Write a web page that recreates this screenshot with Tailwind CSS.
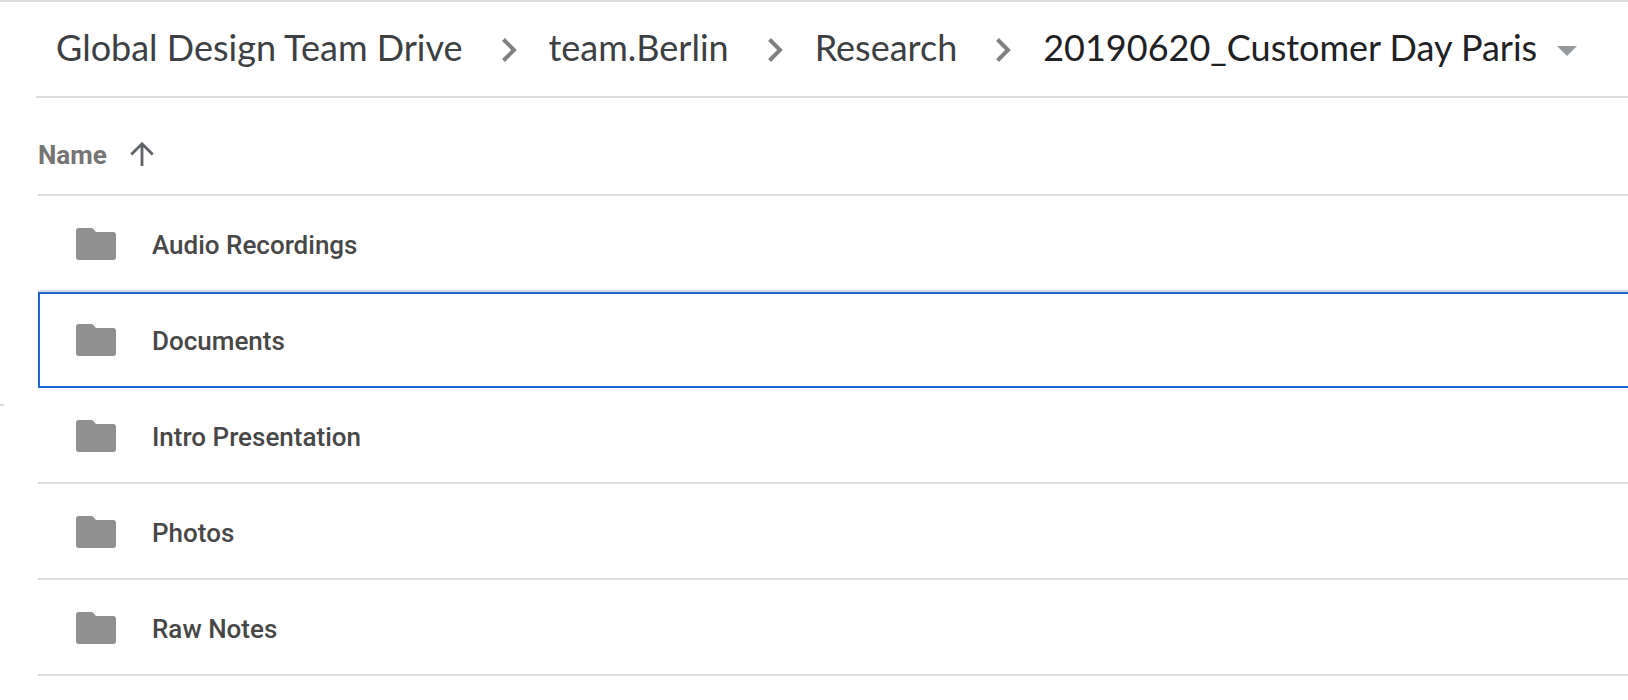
<!DOCTYPE html>
<html lang="en">
<head>
<meta charset="utf-8">
<meta name="viewport" content="width=device-width, initial-scale=1">
<title>20190620_Customer Day Paris</title>
<script src="https://cdn.jsdelivr.net/npm/@tailwindcss/browser@4"></script>
</head>
<body class="bg-white font-['Roboto',sans-serif]">
<svg class="hidden" aria-hidden="true">
  <symbol id="folder" viewBox="0 0 24 24"><path d="M9.900 4H3.500A1.500 1.500 0 0 0 2 5.500v13A1.500 1.500 0 0 0 3.500 20h17a1.500 1.500 0 0 0 1.500-1.500v-11A1.500 1.500 0 0 0 20.500 6H12l-1.400-1.500A1.400 1.400 0 0 0 9.900 4z"/></symbol>
  <symbol id="chevron" viewBox="0 0 16 24"><path d="M2.500 1.500 13 12 2.500 22.500" fill="none" stroke="currentColor" stroke-width="4"/></symbol>
</svg>
<div class="flex min-h-screen border-t-2 border-[#dadce0]">
  <aside class="w-9 shrink-0 pt-[402px]"><hr class="w-1 border-t-2 border-[#dadce0]"></aside>
  <main class="min-w-0 flex-1">
    <nav aria-label="Breadcrumb" class="border-b-2 border-[#dadce0]">
      <ol class="flex h-[94px] items-center pb-1 pl-5 text-[36px] leading-[44px] whitespace-nowrap text-[#3c4043] font-['Lato',sans-serif]">
        <li class="flex items-center"><a href="#">Global Design Team Drive</a><svg class="mt-1.5 mr-8 ml-[38px] h-6 w-4 text-[#808080]"><use href="#chevron"/></svg></li>
        <li class="flex items-center"><a href="#">team.Berlin</a><svg class="mt-1.5 mr-8 ml-[38px] h-6 w-4 text-[#808080]"><use href="#chevron"/></svg></li>
        <li class="flex items-center"><a href="#">Research</a><svg class="mt-1.5 mr-8 ml-[38px] h-6 w-4 text-[#808080]"><use href="#chevron"/></svg></li>
        <li><button type="button" class="flex items-center gap-5 text-[#202124]">20190620_Customer Day Paris<svg class="mt-2 h-[10px] w-5" viewBox="0 0 20 10"><path d="M0 0h20L10 10z" fill="#959a9e"/></svg></button></li>
      </ol>
    </nav>
    <div class="pl-0.5">
    <table class="w-full border-separate border-spacing-0 text-left">
      <thead>
        <tr><th scope="col" aria-sort="ascending" class="h-[98px] border-b-2 border-[#dadce0] p-0 pt-[18px]">
          <button type="button" class="flex items-center gap-[23px] text-[26px] leading-8 font-bold text-[#757575]">Name<svg class="mb-0.5 size-6" viewBox="0 0 24 24"><path d="M12 24V2M1.300 12.500 12 1.800l10.700 10.700" fill="none" stroke="#5f6368" stroke-width="2.800"/></svg></button>
        </th></tr>
      </thead>
      <tbody class="text-[26px] leading-8 font-medium text-[#474747]">
        <tr><td class="h-24 border-b-2 border-[#dadce0] p-0 pt-0.5"><a href="#" class="flex items-center gap-8 pl-[34px]"><svg class="size-12 fill-[#8f8f8f]"><use href="#folder"/></svg><span class="pt-0.5">Audio Recordings</span></a></td></tr>
        <tr aria-selected="true"><td class="h-24 border-2 border-r-0 border-[#1967d2] p-0"><a href="#" class="flex items-center gap-8 pl-8"><svg class="size-12 fill-[#8f8f8f]"><use href="#folder"/></svg><span class="pt-0.5">Documents</span></a></td></tr>
        <tr><td class="h-24 border-b-2 border-[#dadce0] p-0 pt-0.5"><a href="#" class="flex items-center gap-8 pl-[34px]"><svg class="size-12 fill-[#8f8f8f]"><use href="#folder"/></svg><span class="pt-0.5">Intro Presentation</span></a></td></tr>
        <tr><td class="h-24 border-b-2 border-[#dadce0] p-0 pt-0.5"><a href="#" class="flex items-center gap-8 pl-[34px]"><svg class="size-12 fill-[#8f8f8f]"><use href="#folder"/></svg><span class="pt-0.5">Photos</span></a></td></tr>
        <tr><td class="h-24 border-b-2 border-[#dadce0] p-0 pt-0.5"><a href="#" class="flex items-center gap-8 pl-[34px]"><svg class="size-12 fill-[#8f8f8f]"><use href="#folder"/></svg><span class="pt-0.5">Raw Notes</span></a></td></tr>
      </tbody>
    </table>
    </div>
  </main>
</div>
</body>
</html>
